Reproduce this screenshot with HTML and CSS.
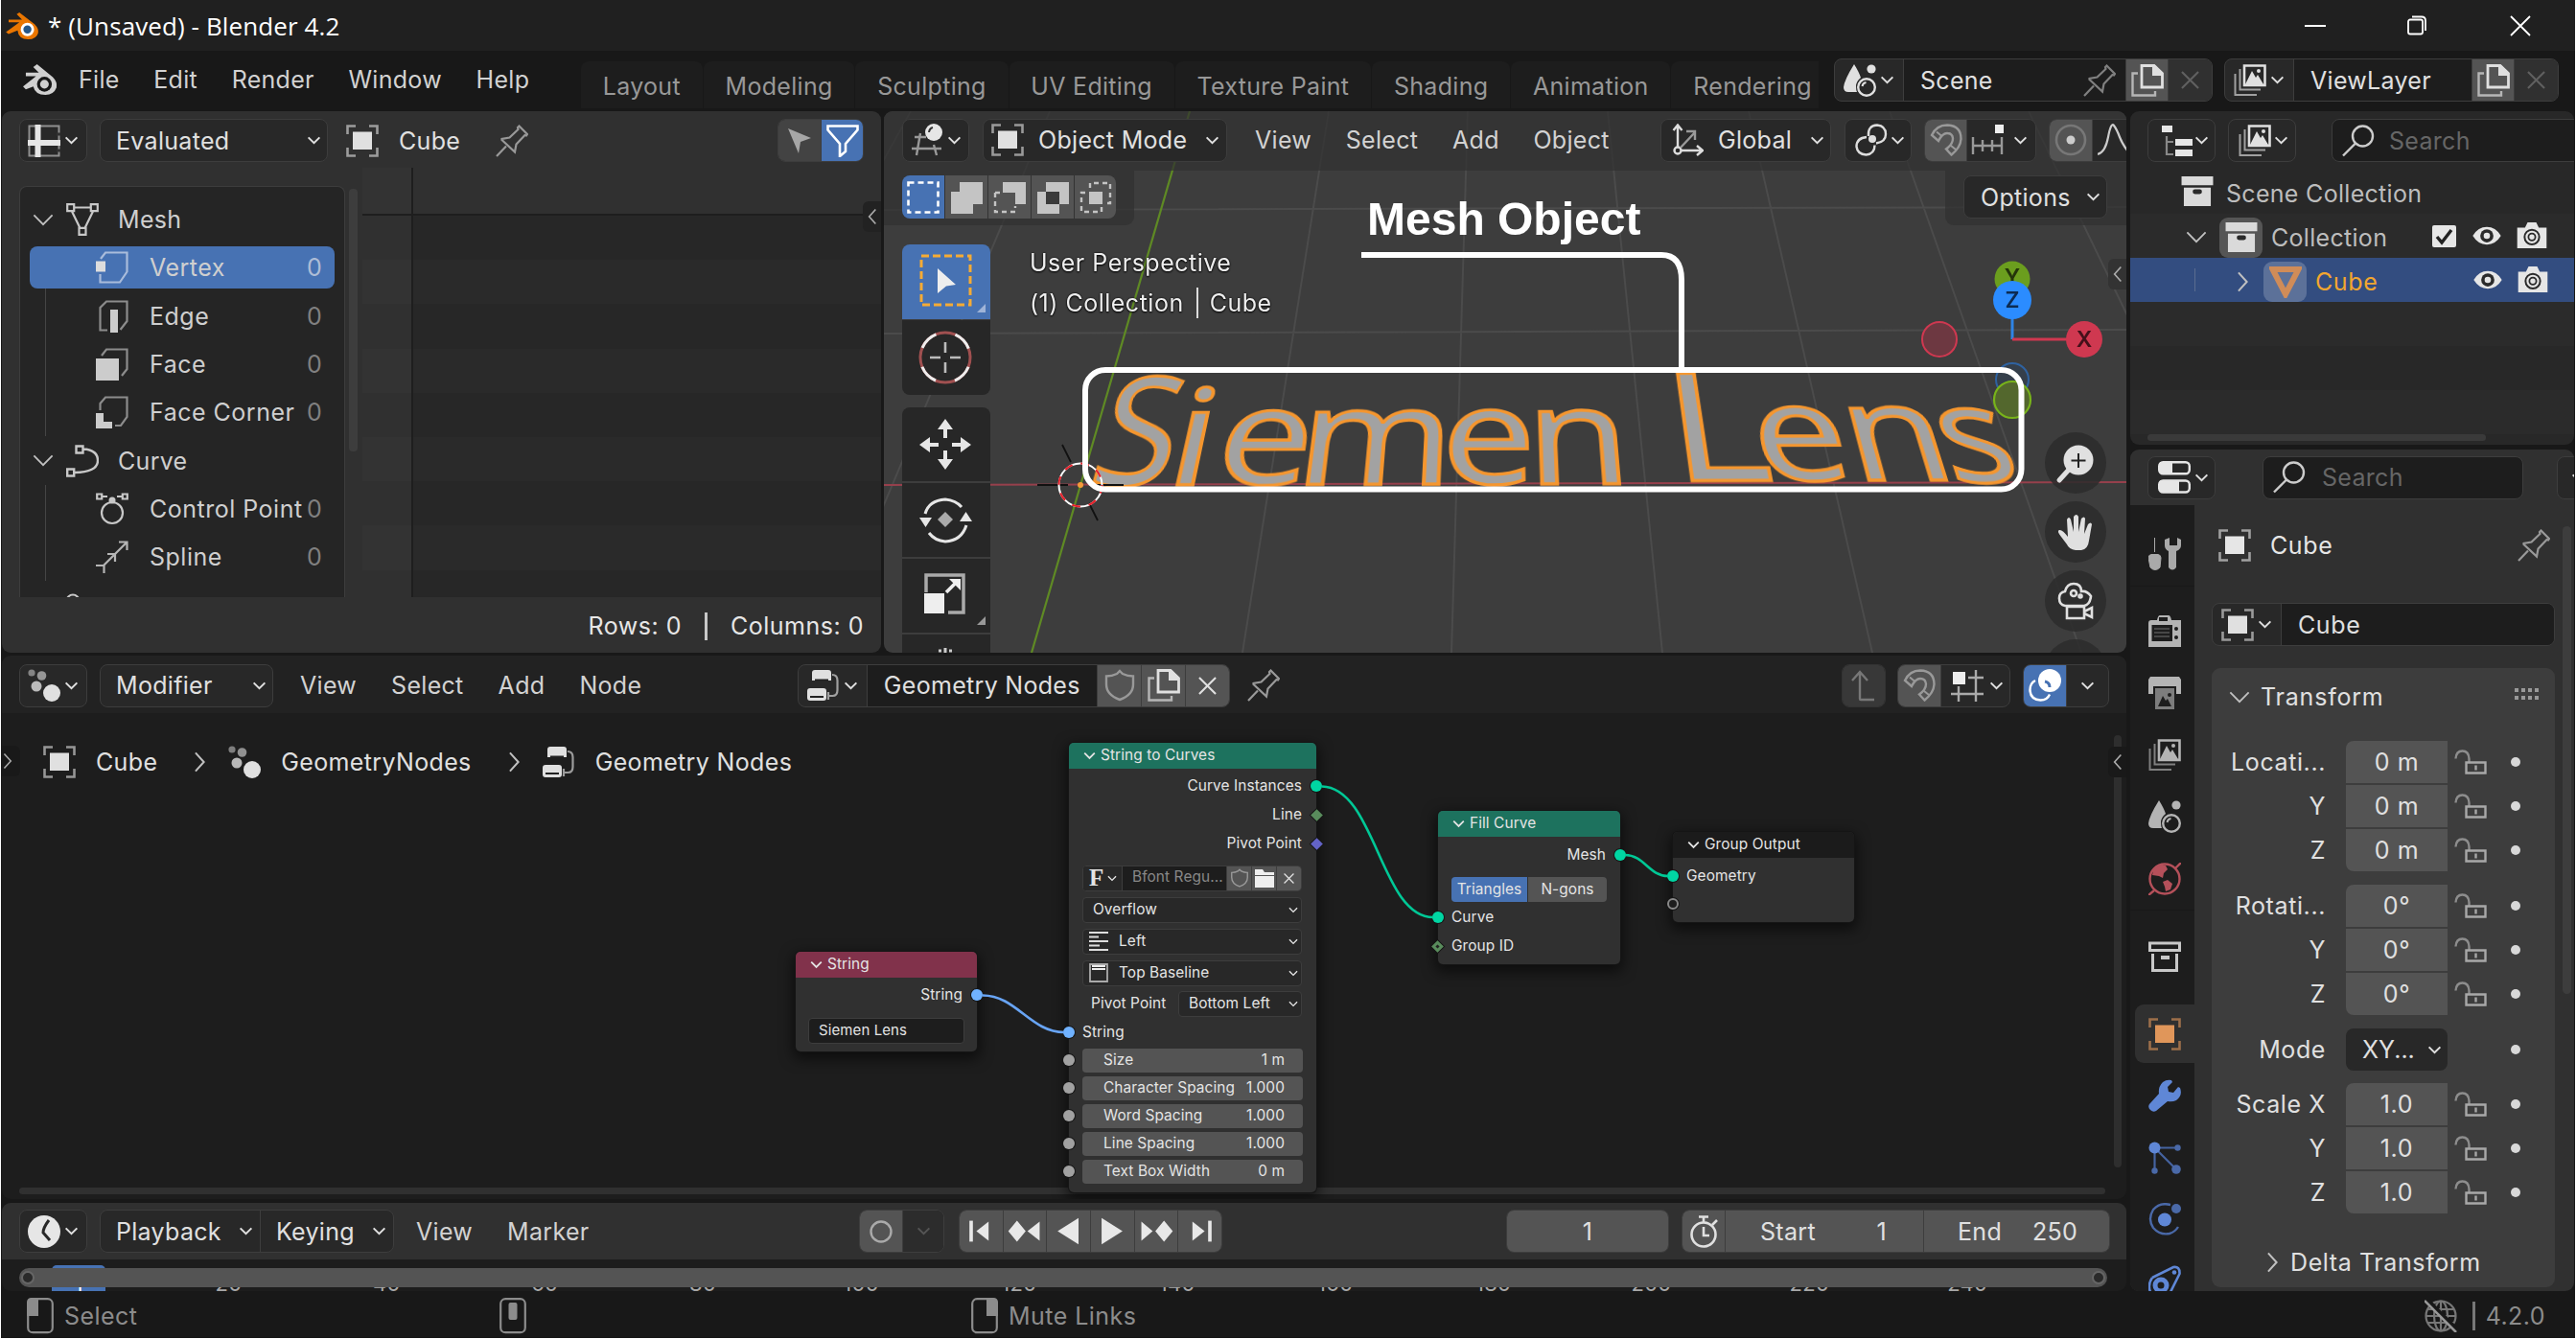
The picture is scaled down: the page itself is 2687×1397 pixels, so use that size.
FILE: index.html
```html
<!DOCTYPE html>
<html lang="en">
<head>
<meta charset="utf-8">
<title>* (Unsaved) - Blender 4.2</title>
<link rel="stylesheet" href="styles.css">
</head>
<body>
<svg class="defs" width="0" height="0">
  <symbol id="cv" viewBox="0 0 16 10"><path d="M1.5 1.5 8 8l6.500-6.500" fill="none" stroke="currentColor" stroke-width="2.200"/></symbol>
  <symbol id="cvb" viewBox="0 0 24 14"><path d="M1.500 1.500 12 12 22.500 1.500" fill="none" stroke="currentColor" stroke-width="2"/></symbol>
  <symbol id="cr" viewBox="0 0 14 24"><path d="M2 1.500 11.500 12 2 22.500" fill="none" stroke="currentColor" stroke-width="2.200"/></symbol>
  <symbol id="cl" viewBox="0 0 12 20"><path d="M10 1 2 10l8 9" fill="none" stroke="currentColor" stroke-width="2"/></symbol>
  <symbol id="obj" viewBox="0 0 34 34"><path d="M1.500 10V1.500H10M24 1.500h8.500V10M32.500 24v8.500H24M10 32.500H1.500V24" fill="none" stroke="currentColor" stroke-opacity=".62" stroke-width="2.600"/><path d="M7 7.500h20v18.500H7z" fill="currentColor"/></symbol>
  <symbol id="pin" viewBox="0 0 34 34"><path d="M1 33 11 22.500M6.500 16 20 28.500l1.500-8 9-9.500 1.500.500 1-1.500L24.500 1.500 23 3l.500 2-9 8.500-8 1.500z" fill="none" stroke="currentColor" stroke-width="2.200"/></symbol>
  <symbol id="copy" viewBox="0 0 34 34"><path d="M11 1.500h13l8.500 8V24H11z" fill="none" stroke="currentColor" stroke-width="2.800"/><path d="M22 1h3l8 8v3H22z" fill="currentColor"/><path d="M7 9.500H1.500v23H25V28" fill="none" stroke="currentColor" stroke-opacity=".7" stroke-width="2.400"/></symbol>
  <symbol id="x" viewBox="0 0 20 20"><path d="M1 1l18 18M19 1 1 19" fill="none" stroke="currentColor" stroke-width="2.200"/></symbol>
  <symbol id="shield" viewBox="0 0 32 34"><path d="M16 2 19 5q5 2.500 11 2.500V16q0 11-14 16Q2 27 2 16V7.500Q8 7.500 13 5z" fill="none" stroke="currentColor" stroke-width="2.400"/></symbol>
  <symbol id="search" viewBox="0 0 34 34"><circle cx="21.500" cy="12" r="10.500" fill="none" stroke="currentColor" stroke-width="2.400"/><path d="M14 19.500 1 32.500" stroke="currentColor" stroke-width="2.400"/></symbol>
  <symbol id="layers" viewBox="0 0 34 34"><path d="M11 1.500h21.500V22H11z" fill="none" stroke="currentColor" stroke-width="2.600"/><path d="M12 21l7-14 4 7 2-3 6 10z" fill="currentColor"/><circle cx="26" cy="7" r="2" fill="currentColor"/><path d="M6.500 5v21.500H28M1.500 10v22H24" fill="none" stroke="currentColor" stroke-opacity=".65" stroke-width="2"/></symbol>
  <symbol id="scene" viewBox="0 0 34 34"><path d="M11 0Q16 8 18 14q-5 4-5 9 0 4 1 6H5Q0 29 0 24 1 16 11 0z" fill="currentColor"/><circle cx="29" cy="5" r="4.600" fill="currentColor"/><circle cx="24" cy="24" r="8.800" fill="none" stroke="currentColor" stroke-width="2.400"/><path d="M19.500 23q.5-3.500 4-4" fill="none" stroke="currentColor" stroke-width="2"/></symbol>
  <symbol id="geo" viewBox="0 0 34 34"><g fill="currentColor"><circle cx="25" cy="25" r="9"/><circle cx="9" cy="18" r="5.500" opacity=".8"/><circle cx="14.500" cy="7" r="4.800" opacity=".6"/><circle cx="4" cy="4" r="3.600" opacity=".5"/></g></symbol>
  <symbol id="tree" viewBox="0 0 34 34"><path d="M8 1h14q3 0 3 3v8H5V4q0-3 3-3zM3 20h14q3 0 3 3v7q0 3-3 3H3q-3 0-3-3v-7q0-3 3-3z" fill="currentColor"/><path d="M8 11.500h14M3 29h14" stroke="#222" stroke-width="2"/><path d="M26 6q5.500 0 5.500 6v10q0 6-5 6H22M22 24v8" fill="none" stroke="currentColor" stroke-opacity=".65" stroke-width="2.200"/></symbol>
  <symbol id="box" viewBox="0 0 34 32"><path d="M0 0h34v9.500H0zM2.500 12h29v20h-29z" fill="currentColor"/><rect x="12" y="14" width="10" height="5" rx="2.500" fill="#2a2a2a"/></symbol>
  <symbol id="eye" viewBox="0 0 34 24"><path d="M1 12Q7 2 17 2t16 10Q27 22 17 22T1 12z" fill="currentColor"/><circle cx="17" cy="12" r="7.500" fill="#2b2b2b"/><circle cx="17" cy="12" r="3.600" fill="currentColor"/></symbol>
  <symbol id="cam" viewBox="0 0 34 30"><path d="M0 6h9l3-6h10l3 6h9v24H0z" fill="currentColor"/><circle cx="17" cy="17" r="8.500" fill="none" stroke="#2b2b2b" stroke-width="2.200"/><circle cx="17" cy="17" r="4" fill="none" stroke="#2b2b2b" stroke-width="2"/></symbol>
  <symbol id="magnet" viewBox="0 0 34 34"><path d="M2 12Q7 1.500 18 1.500 32.500 2 32.500 16q-.5 9-10 16.500L17 26.500q7-5 7-11Q23.500 10 18 10q-5 0-9 8z" fill="none" stroke="currentColor" stroke-width="2.400"/><path d="M7 8.500l6 5M27.500 27.500l-6-5" stroke="currentColor" stroke-width="2"/></symbol>
  <symbol id="lock" viewBox="0 0 34 26"><path d="M1.500 9.500Q2 1.500 8.500 1.500t7 8v4" fill="none" stroke="currentColor" stroke-opacity=".75" stroke-width="2.400"/><path d="M12.500 13.500h20v11h-20z" fill="none" stroke="currentColor" stroke-width="2.400"/><path d="M22.500 16.500v5" stroke="currentColor" stroke-width="2.400"/></symbol>
  <symbol id="wrench" viewBox="0 0 34 34"><path d="M33 9q3 8-4 13-4 2-9 1L8 33q-3 2-6-1t-1-6l10-11Q10 8 15 3q4-3 9-2l1 2-5 5 1 5 5 1 5-6z" fill="currentColor"/></symbol>
  <symbol id="mouse" viewBox="0 0 28 38"><rect x="1.200" y="1.200" width="25.600" height="35" rx="5" fill="none" stroke="currentColor" stroke-width="2.200"/></symbol>
</svg>

<div class="app">
  <header class="title">
    <svg class="logo" viewBox="0 0 38 30"><path d="M1 22 16 11H4V8h15l-6-6 3-2 17 13q5 5 4 10-2 7-11 7-11 0-12-10L4 24z" fill="#ea7600"/><circle cx="25" cy="19" r="7.500" fill="#fff"/><circle cx="25" cy="19" r="4.500" fill="#265787"/></svg>
    <span class="title-text">* (Unsaved) - Blender 4.2</span>
    <svg class="winctl" viewBox="0 0 240 30"><path d="M1 15h22" stroke="#fff" stroke-width="2"/><rect x="109" y="8.500" width="15" height="15" rx="2" fill="none" stroke="#fff" stroke-width="1.800"/><path d="M113 5.500h10q4 0 4 4V20" fill="none" stroke="#fff" stroke-width="1.800"/><path d="M216 5l20 20M236 5l-20 20" stroke="#fff" stroke-width="1.800"/></svg>
  </header>

  <div class="topbar">
    <svg class="blogo" viewBox="0 0 38 34"><path d="M1 24 15 13H4v-4h14l-6-6 4-3 17 14q5 5 4 11-3 8-12 8-11 0-13-9L4 27z" fill="#d0d0d0"/><circle cx="24" cy="21.500" r="8" fill="#181818"/><circle cx="24" cy="21.500" r="4.700" fill="#d0d0d0"/></svg>
    <nav class="menu"><span>File</span><span>Edit</span><span>Render</span><span>Window</span><span>Help</span></nav>
    <div class="tabs"><span>Layout</span><span>Modeling</span><span>Sculpting</span><span>UV Editing</span><span>Texture Paint</span><span>Shading</span><span>Animation</span><span>Rendering</span></div>
    <div class="group scene">
      <span class="seg dd"><svg class="ic"><use href="#scene"/></svg><svg class="cv"><use href="#cv"/></svg></span>
      <span class="seg field scene-name">Scene<svg class="ic dim"><use href="#pin"/></svg></span>
      <span class="seg lit"><svg class="ic"><use href="#copy"/></svg></span>
      <span class="seg off"><svg class="xx"><use href="#x"/></svg></span>
    </div>
    <div class="group layer">
      <span class="seg dd"><svg class="ic"><use href="#layers"/></svg><svg class="cv"><use href="#cv"/></svg></span>
      <span class="seg field layer-name">ViewLayer</span>
      <span class="seg lit"><svg class="ic"><use href="#copy"/></svg></span>
      <span class="seg off"><svg class="xx"><use href="#x"/></svg></span>
    </div>
  </div>

  <div class="work">
    <div class="left">
      <div class="upper">
        <section class="sheet">
          <div class="head">
            <span class="btn dd"><svg class="ic" viewBox="0 0 34 34"><path d="M1.500 1.500h31v31h-31z" fill="none" stroke="#8f8f8f" stroke-width="2"/><path d="M0 19h34M10.500 0v34" stroke="#e6e6e6" stroke-width="6"/><path d="M30 10h4M30 27h4" stroke="#303030" stroke-width="3"/></svg><svg class="cv"><use href="#cv"/></svg></span>
            <span class="btn eval">Evaluated<svg class="cv"><use href="#cv"/></svg></span>
            <svg class="ic ml19"><use href="#obj"/></svg><span class="ml20 objname">Cube</span><svg class="ic dim pinned"><use href="#pin"/></svg>
            <div class="group filt"><span class="seg mid"><svg width="24" height="26" viewBox="0 0 24 26"><path d="M0 0 24 10 13 14 11 26z" fill="#a6a6a6"/></svg></span><span class="seg sel"><svg class="ic" viewBox="0 0 34 34"><path d="M1.500 1.500h31v4L20 20v8l-6 5V20L1.500 5.500z" fill="none" stroke="#fff" stroke-width="2.600"/></svg></span></div>
          </div>
          <div class="sheet-body">
            <div class="tree">
              <div class="tr top"><svg class="cvb"><use href="#cvb"/></svg><svg class="ic" viewBox="0 0 34 34"><g fill="none" stroke="#c8c8c8" stroke-width="2.200"><path d="M1.200 1.200h7v7h-7zM25.800 1.200h7v7h-7zM13.500 25.800h7v7h-7zM8 4.500h18M6 8.500 14.500 26M28 8.500 19.500 26"/></g></svg><span>Mesh</span></div>
              <div class="kids">
              <div class="tr on"><svg class="ic" viewBox="0 0 34 34"><path d="M5 8l5-6.500h22.500v20L25 32.500H4.500V24" fill="none" stroke="#a9bcdb" stroke-width="2.200"/><path d="M0 10.500h10v11H0z" fill="#ddd"/></svg><span>Vertex</span><b>0</b></div>
              <div class="tr"><svg class="ic" viewBox="0 0 34 34"><path d="M12 31.500H4.500V8L11 1.500h21.500V22l-7 9" fill="none" stroke="#8c8c8c" stroke-width="2.200"/><path d="M15 10h8v24h-8z" fill="#ccc"/></svg><span>Edge</span><b>0</b></div>
              <div class="tr"><svg class="ic" viewBox="0 0 34 34"><path d="M6 8l5-6.500h21.500V22L27 29" fill="none" stroke="#8c8c8c" stroke-width="2.200"/><path d="M0 11h24v23H0z" fill="#ccc"/></svg><span>Face</span><b>0</b></div>
              <div class="tr"><svg class="ic" viewBox="0 0 34 34"><path d="M4.500 15V8L10 1.500h22.500V22L26 31h-6" fill="none" stroke="#8c8c8c" stroke-width="2.200"/><path d="M0 18h8v9h9v7H0z" fill="#ccc"/></svg><span>Face Corner</span><b>0</b></div>
              </div>
              <div class="tr top"><svg class="cvb"><use href="#cvb"/></svg><svg class="ic" viewBox="0 0 34 34"><g fill="none" stroke="#c8c8c8" stroke-width="2.400"><path d="M10.500 1.500h7v7h-7zM1.200 25.500h7v7h-7zM18 4.500q15 1 15 12 0 12-24 12.500"/></g></svg><span>Curve</span></div>
              <div class="kids two">
              <div class="tr"><svg class="ic" viewBox="0 0 34 34"><g fill="none" stroke="#c8c8c8" stroke-width="2.200"><circle cx="17" cy="21" r="11"/><path d="M1.200 1.500h5v5h-5zM27.800 1.500h5v5h-5zM7 4h5M22 4h5"/></g><circle cx="17" cy="8" r="3.500" fill="#c8c8c8"/></svg><span>Control Point</span><b>0</b></div>
              <div class="tr"><svg class="ic" viewBox="0 0 34 34"><path d="M8 26 32 2M24 1.500h8.500V10M8.500 34v-8H0M20 22v-8h-8" fill="none" stroke="#b5b5b5" stroke-width="2.200"/></svg><span>Spline</span><b>0</b></div>
              </div>
              <div class="tr cut"><svg width="16" height="20" viewBox="0 0 16 20"><circle cx="8" cy="8" r="6.500" fill="none" stroke="#c8c8c8" stroke-width="2.200"/></svg></div>
            </div>
            <i class="tree-bar"></i>
            <div class="table"><div class="thead"><i></i></div><div class="tbody"><i></i></div></div>
          </div>
          <div class="sheet-foot"><span>Rows: 0</span><i></i><span>Columns: 0</span></div>
          <span class="flap sheet-flap"><svg width="10" height="18"><use href="#cl"/></svg></span>
        </section>

        <section class="view3d">
          <svg class="scene3d" viewBox="922 116 1296 565">
            <g stroke="#4b4b4b" stroke-width="2" fill="none"><path d="M950 116 638 681M1095 116 857 681M1386 116 1296 681M1531 116 1514 681M1677 116 1734 681M1824 116 1953 681M1971 116 2171 681M2116 116 2389 681M922 219 2218 216M922 348 2218 344"/></g>
            <path d="M922 506 2218 503" stroke="#96404c" stroke-width="2"/>
            <path d="M1241 116 1076 681" stroke="#5f8a24" stroke-width="2.200"/>
          </svg>
          <svg class="meshtext" viewBox="0 0 10 10">
            <text transform="scale(.93 1)" x="-460" y="0" class="cap">S</text>
            <text transform="scale(1.200 1)"><tspan x="-289" class="low">i</tspan><tspan x="-247" class="low">e</tspan><tspan x="-176" class="low">m</tspan><tspan x="-48" class="low">e</tspan><tspan x="28" class="low">n</tspan><tspan x="155" y="-3" class="cap">L</tspan><tspan x="231" class="low">e</tspan><tspan x="313" class="low">n</tspan></text>
            <text transform="scale(1.080 1)" x="441" y="-1" class="low">s</text>
          </svg>
          <div class="head vhead">
            <span class="btn dd"><svg class="ic" viewBox="0 0 34 34"><path d="M4 14h12M1 26h31M10 10 6 33M24 22l3 11" stroke="#999" stroke-width="2.400"/><circle cx="24" cy="9" r="9" fill="#e6e6e6"/><path d="M19 9q.5-4 4-5" stroke="#333" stroke-width="2" fill="none"/></svg><svg class="cv"><use href="#cv"/></svg></span>
            <span class="btn mode"><svg class="ic"><use href="#obj"/></svg><span>Object Mode</span><svg class="cv"><use href="#cv"/></svg></span>
            <nav class="menu vmenu"><span>View</span><span>Select</span><span>Add</span><span>Object</span></nav>
            <span class="btn global"><svg class="ic" viewBox="0 0 34 34"><g fill="none" stroke="#ddd" stroke-width="2.400"><path d="M7 24V3M2.500 7 7 1.500 11.500 7M10 28h22M27 23l6 5-6 5"/><circle cx="7" cy="28" r="3.500"/><path d="M10 25 25 9M16 8h9v9" stroke="#999"/></g></svg><span>Global</span><svg class="cv"><use href="#cv"/></svg></span>
            <span class="btn dd pivot"><svg class="ic" viewBox="0 0 34 34"><g fill="none" stroke="#ddd" stroke-width="2.400"><path d="M14 13q-1-11 9-11.500 9 1 9 9.500 0 8-10 9.500"/><path d="M12 14Q1.500 15 1.500 24q1 8 10 8.500 9-1 9-10"/></g><circle cx="18" cy="16" r="4" fill="#ddd"/></svg><svg class="cv"><use href="#cv"/></svg></span>
            <span class="group snap"><span class="seg lit"><svg class="ic dim"><use href="#magnet"/></svg></span><span class="seg dd"><svg class="ic" viewBox="0 0 34 34"><path d="M2 14v18M12 17v12M22 17v12M32 14v18M2 23h30" stroke="#999" stroke-width="2.400"/><path d="M25 1h9v9h-9z" fill="#eee"/></svg><svg class="cv"><use href="#cv"/></svg></span></span>
            <span class="group prop"><span class="seg lit"><svg class="ic" viewBox="0 0 34 34"><circle cx="17" cy="17" r="15" fill="none" stroke="#777" stroke-width="2.600"/><circle cx="17" cy="17" r="4.500" fill="#ccc"/></svg></span><span class="seg"><svg class="ic" viewBox="0 0 34 34"><path d="M0 32Q8 30 11 14T17 2t6 12 11 18" fill="none" stroke="#ccc" stroke-width="2.200"/></svg></span></span>
          </div>
          <div class="subhead">
            <div class="selmodes"><div class="group">
              <span class="seg sel"><svg class="ic" viewBox="0 0 34 34"><path d="M1.500 1.500h31v31h-31z" fill="none" stroke="#fff" stroke-width="2.600" stroke-dasharray="6 4"/></svg></span>
              <span class="seg lit"><svg class="ic" viewBox="0 0 34 34"><path d="M10 1h24v23H24v10H1V11h9z" fill="#c4c4c4"/></svg></span>
              <span class="seg lit"><svg class="ic" viewBox="0 0 34 34"><path d="M10 1h24v23H23V12H10z" fill="#c4c4c4"/><path d="M2 12v20h21v-6M2 12h6" fill="none" stroke="#c4c4c4" stroke-width="2.400" stroke-dasharray="5 4"/></svg></span>
              <span class="seg lit"><svg class="ic" viewBox="0 0 34 34"><path d="M10 1h24v23H24v10H1V11h9z" fill="#c4c4c4"/><path d="M10 11h14v13H10z" fill="#3a3a3a"/></svg></span>
              <span class="seg lit"><svg class="ic" viewBox="0 0 34 34"><path d="M11 7V2h21v21h-5M6 12H2v20h21v-5" fill="none" stroke="#c4c4c4" stroke-width="2.400" stroke-dasharray="5 4"/><path d="M10 11h14v13H10z" fill="#c4c4c4"/></svg></span>
            </div></div>
            <div class="optwrap"><span class="btn opts">Options<svg class="cv"><use href="#cv"/></svg></span></div>
          </div>
          <div class="vbody">
            <div class="tools">
              <div class="toolset">
              <span class="tool sel"><svg viewBox="0 0 92 77"><rect x="20" y="13" width="51" height="51" fill="none" stroke="#f5ab35" stroke-width="3" stroke-dasharray="8 4"/><path d="M37 26l19 17-10 1.500L37 52z" fill="#eee"/><path d="M78 72h9v-9z" fill="#9fb4d8"/></svg></span>
              <span class="tool"><svg viewBox="0 0 92 77"><circle cx="45" cy="40" r="26" fill="none" stroke="#a05050" stroke-width="3"/><circle cx="45" cy="40" r="26" fill="none" stroke="#eee" stroke-width="3" stroke-dasharray="20.400 20.400" stroke-dashoffset="-10"/><path d="M45 24v11M45 45v11M29 40h11M50 40h11" stroke="#bbb" stroke-width="2.600"/></svg></span>
              </div>
              <div class="toolset">
              <span class="tool"><svg viewBox="0 0 92 77"><path d="M45 13l8 11H37zM45 66l8-11H37zM18 40l11-8v16zM72 40l-11-8v16z" fill="#e6e6e6"/><path d="M45 24v9M45 46v9M29 40h9M52 40h9" stroke="#e6e6e6" stroke-width="4"/></svg></span>
              <span class="tool"><svg viewBox="0 0 92 77"><path d="M24 33q4-14 21-15 11 1 17 8M67 45q-5 16-22 17-11-1-17-9" fill="none" stroke="#e6e6e6" stroke-width="3"/><path d="M18 37h13l-6.500 10zM60 41h13l-6.500-10z" fill="#e6e6e6"/><path d="M45 31l8 8-8 8-8-8z" fill="#aaa"/></svg></span>
              <span class="tool"><svg viewBox="0 0 92 77"><path d="M25 36V18h39v39H48" fill="none" stroke="#aaa" stroke-width="3.500"/><path d="M23 37h21v21H23z" fill="#eee"/><path d="M46 36 58 24" stroke="#eee" stroke-width="3.500"/><path d="M49 22h12v12z" fill="#eee"/><path d="M78 70h9v-9z" fill="#999"/></svg></span>
              <span class="tool"><svg viewBox="0 0 92 77"><path d="M45 15v5M38 18h3M49 18h3" stroke="#ccc" stroke-width="3"/></svg></span>
              </div>
            </div>
            <div class="info"><p>User Perspective</p><p>(1) Collection<i></i>Cube</p></div>
          </div>
          <span class="flap view-flap"><svg width="10" height="18"><use href="#cl"/></svg></span>
          <svg class="over3d" viewBox="922 116 1296 565">
            <path d="M1082 506h32M1140 506h32M1108 464l9 18M1136 525l9 18" stroke="#111" stroke-width="1.800"/>
            <circle cx="1127" cy="506" r="22.500" fill="none" stroke="#fff" stroke-width="2"/><circle cx="1127" cy="506" r="22.500" fill="none" stroke="#e8202a" stroke-width="2" stroke-dasharray="8.800 8.800"/>
            <circle cx="1127" cy="506" r="3" fill="#f59a3a"/>
            <path d="M2099 354v-22" stroke="#2e84e6" stroke-width="3"/><path d="M2099 354h60" stroke="#d03850" stroke-width="3"/>
            <circle cx="2099" cy="396" r="17" fill="#353f4b" stroke="#2f62a0" stroke-width="2"/>
            <circle cx="2099" cy="417" r="19" fill="#53672d" stroke="#78b31a" stroke-width="2.200"/>
            <circle cx="2023" cy="354" r="18" fill="#6d3841" stroke="#cf3850" stroke-width="2"/>
            <circle cx="2099" cy="291" r="18.500" fill="#6b9e1e"/>
            <g class="axis"><text x="2099" y="297" fill="#24350a">Y</text></g>
            <circle cx="2099" cy="313" r="20" fill="#2b8cff"/>
            <circle cx="2174" cy="354" r="19" fill="#cf3850"/>
            <g class="axis"><text x="2099" y="321" fill="#0c2b52">Z</text><text x="2174" y="362" fill="#43101a">X</text></g>
            <g fill="#2c2c2c" fill-opacity=".85"><circle cx="2165" cy="483" r="32"/><circle cx="2165" cy="555" r="32"/><circle cx="2165" cy="627" r="32"/><circle cx="2165" cy="699" r="32"/></g>
            <circle cx="2168" cy="480" r="15.500" fill="#e0e0e0"/><path d="M2168 473v15M2160.500 480.500h15" stroke="#222" stroke-width="2"/><path d="M2158 490l-10 11" stroke="#e0e0e0" stroke-width="5" stroke-linecap="round"/>
            <path d="M2150 560q-5-6-2-7 3-1 9 7l-1-18q2-4 4 0l3 13v-16q3-4 5 0v16l3-14q3-3 4 0l-1 16 4-10q3-3 4 0l-3 17q-1 9-8 10h-6q-7-1-9-6z" fill="#e0e0e0"/>
            <g fill="none" stroke="#e0e0e0" stroke-width="2.600"><path d="M2154 632q-6-1-6-8 0-6 6-7 2-8 9-8 8 0 8 8 6-1 10 5-1 9-7 10z"/><path d="M2156 633h18v12h-18zM2174 638l8-4v10l-8-4"/><circle cx="2163" cy="619" r="3"/><circle cx="2170" cy="622" r="1.500"/></g>
            <path d="M1420 266h313q21 0 21 26v94" fill="none" stroke="#fff" stroke-width="6"/>
            <rect x="1132" y="386" width="976.500" height="124.500" rx="21" fill="none" stroke="#fff" stroke-width="6"/>
            <text class="callout" x="1426" y="244.500">Mesh Object</text>
          </svg>
        </section>
      </div>

      <section class="nodes">
        <div class="head nhead">
          <span class="btn dd"><svg class="ic"><use href="#geo"/></svg><svg class="cv"><use href="#cv"/></svg></span>
          <span class="btn modf">Modifier<svg class="cv"><use href="#cv"/></svg></span>
          <nav class="menu nmenu"><span>View</span><span>Select</span><span>Add</span><span>Node</span></nav>
          <div class="group data"><span class="seg dd"><svg class="ic"><use href="#tree"/></svg><svg class="cv"><use href="#cv"/></svg></span><span class="seg field dname">Geometry Nodes</span><span class="seg lit"><svg class="ic dim"><use href="#shield"/></svg></span><span class="seg lit"><svg class="ic"><use href="#copy"/></svg></span><span class="seg lit"><svg class="xx"><use href="#x"/></svg></span></div>
          <svg class="ic dim npin"><use href="#pin"/></svg>
          <div class="group up"><span class="seg offl"><svg class="ic" viewBox="0 0 34 34"><path d="M13 3v28q0 1 1 1h14M5 12l8-9 8 9" fill="none" stroke="#777" stroke-width="2.400"/></svg></span></div>
          <div class="group nsnap"><span class="seg lit"><svg class="ic dim"><use href="#magnet"/></svg></span><span class="seg dd"><svg class="ic" viewBox="0 0 34 34"><path d="M18 9h16M0 26h34M26 1v33M8 18v16" stroke="#aaa" stroke-width="2.400"/><path d="M2 3h13v13H2z" fill="#eee"/></svg><svg class="cv"><use href="#cv"/></svg></span></div>
          <div class="group over"><span class="seg sel"><svg class="ic" viewBox="0 0 34 34"><circle cx="22" cy="12" r="12" fill="#fff"/><path d="M7 12Q1 15 1.500 23q1 9 11 9.500 7 0 9.500-6" fill="none" stroke="#fff" stroke-width="2.400"/><path d="M17 13q5 1 5 6" stroke="#4772b3" stroke-width="3" fill="none"/></svg></span><span class="seg ov2"><svg class="cv"><use href="#cv"/></svg></span></div>
        </div>
        <div class="crumbs"><svg class="ic"><use href="#obj"/></svg><span>Cube</span><svg class="cr"><use href="#cr"/></svg><svg class="ic"><use href="#geo"/></svg><span>GeometryNodes</span><svg class="cr"><use href="#cr"/></svg><svg class="ic"><use href="#tree"/></svg><span>Geometry Nodes</span></div>
        <i class="hbar"></i><i class="vbar"></i>
        <span class="flap n-left"><svg width="10" height="20"><use href="#cr"/></svg></span>
        <span class="flap n-right"><svg width="10" height="18"><use href="#cl"/></svg></span>

        <div class="node n-string"><h4 class="red"><svg><use href="#cv"/></svg>String</h4>
          <div class="out">String<i class="sock str"></i></div><div class="nfield">Siemen Lens</div></div>

        <div class="node n-curves"><h4 class="green"><svg><use href="#cv"/></svg>String to Curves</h4>
          <div class="out">Curve Instances<i class="sock geom"></i></div>
          <div class="out">Line<i class="sock dia"></i></div>
          <div class="out">Pivot Point<i class="sock dia pur"></i></div>
          <div class="fontrow"><span class="f">F<svg><use href="#cv"/></svg></span><span class="fn">Bfont Regu...</span><span class="fb"><svg class="dim" width="20" height="20"><use href="#shield"/></svg></span><span class="fb"><svg width="20" height="20" viewBox="0 0 20 20"><path d="M0 1h8l2 3h10v3H0zM0 8h20v12H0z" fill="#eee"/></svg></span><span class="fb"><svg width="11" height="11"><use href="#x"/></svg></span></div>
          <div class="drop">Overflow<svg><use href="#cv"/></svg></div>
          <div class="drop di"><svg class="mi" viewBox="0 0 20 20"><path d="M0 1h20M0 5.500h10M0 10h20M0 14.500h11M0 19h20" stroke="#ddd" stroke-width="1.800"/></svg>Left<svg><use href="#cv"/></svg></div>
          <div class="drop di"><svg class="mi" viewBox="0 0 20 20"><path d="M1 1h18v18H1z" fill="none" stroke="#aaa" stroke-width="1.800"/><path d="M3 3h14M3 6h14" stroke="#eee" stroke-width="2"/></svg>Top Baseline<svg><use href="#cv"/></svg></div>
          <div class="prow"><span>Pivot Point</span><div class="drop">Bottom Left<svg><use href="#cv"/></svg></div></div>
          <div class="in">String<i class="sock str"></i></div>
          <div class="num"><span>Size</span><span>1 m</span><i class="sock"></i></div>
          <div class="num"><span>Character Spacing</span><span>1.000</span><i class="sock"></i></div>
          <div class="num"><span>Word Spacing</span><span>1.000</span><i class="sock"></i></div>
          <div class="num"><span>Line Spacing</span><span>1.000</span><i class="sock"></i></div>
          <div class="num"><span>Text Box Width</span><span>0 m</span><i class="sock"></i></div>
        </div>

        <div class="node n-fill"><h4 class="green"><svg><use href="#cv"/></svg>Fill Curve</h4>
          <div class="out">Mesh<i class="sock geom"></i></div>
          <div class="toggle"><span>Triangles</span><span>N-gons</span></div>
          <div class="in">Curve<i class="sock geom"></i></div>
          <div class="in">Group ID<i class="sock dia hollow"></i></div></div>

        <div class="node n-out"><h4 class="dark"><svg><use href="#cv"/></svg>Group Output</h4>
          <div class="in">Geometry<i class="sock geom"></i></div><div class="in"><i class="sock ring"></i></div></div>

        <svg class="links" viewBox="2 684 2216 567"><g fill="none" stroke-width="2.600"><path d="M1025 1038.500C1060 1038.500 1075 1077 1110 1077" stroke="#68a4f4"/><path d="M1379 820.500C1435 822 1440 957 1495 957" stroke="#00c896"/><path d="M1695 892C1715 892 1720 914 1740 914" stroke="#00c896"/></g></svg>
      </section>

      <section class="timeline">
        <div class="head">
          <span class="btn dd"><svg class="ic" viewBox="0 0 34 34"><circle cx="17" cy="17" r="17" fill="#e6e6e6"/><path d="M22 5q-6 8-6 13l7 8" fill="none" stroke="#282828" stroke-width="3"/></svg><svg class="cv"><use href="#cv"/></svg></span>
          <div class="group play"><span class="seg pb">Playback<svg class="cv"><use href="#cv"/></svg></span><span class="seg ky">Keying<svg class="cv"><use href="#cv"/></svg></span></div>
          <nav class="menu tmenu"><span>View</span><span>Marker</span></nav>
          <div class="group rec"><span class="seg lit"><svg width="24" height="24" viewBox="0 0 24 24"><circle cx="12" cy="12" r="10.500" fill="none" stroke="#aaa" stroke-width="2.400"/></svg></span><span class="seg offd"><svg class="cv"><use href="#cv"/></svg></span></div>
          <div class="group trans">
            <span class="seg lit"><svg viewBox="0 0 44 34"><path d="M11 5v24" stroke="#e8e8e8" stroke-width="4"/><path d="M31 6v22L17 17z" fill="#e8e8e8"/></svg></span>
            <span class="seg lit"><svg viewBox="0 0 44 34"><path d="M13 5l10 12-10 12L3 17zM39 6v22L25 17z" fill="#e8e8e8"/></svg></span>
            <span class="seg lit"><svg viewBox="0 0 44 34"><path d="M33 2v30L9 17z" fill="#e8e8e8"/></svg></span>
            <span class="seg lit"><svg viewBox="0 0 44 34"><path d="M10 2v30l24-15z" fill="#e8e8e8"/></svg></span>
            <span class="seg lit"><svg viewBox="0 0 44 34"><path d="M31 5l10 12-10 12-10-12zM5 6v22l13-11z" fill="#e8e8e8"/></svg></span>
            <span class="seg lit"><svg viewBox="0 0 44 34"><path d="M33 5v24" stroke="#e8e8e8" stroke-width="4"/><path d="M13 6v22l14-11z" fill="#e8e8e8"/></svg></span>
          </div>
          <div class="group frame"><span class="seg lit">1</span></div>
          <div class="group range"><span class="seg lit"><svg class="ic" viewBox="0 0 34 34"><g fill="none" stroke="#e0e0e0" stroke-width="2.600"><circle cx="17" cy="20" r="12.500"/><path d="M12 1.500h10M17 1v6M26 10l5-5M17 12v9h6"/></g></svg></span><span class="seg lit st"><span>Start</span><span>1</span></span><span class="seg lit en"><span>End</span><span>250</span></span></div>
        </div>
        <div class="ruler">
          <div class="ticks"><span class="cur">1</span><span>20</span><span>40</span><span>60</span><span>80</span><span>100</span><span>120</span><span>140</span><span>160</span><span>180</span><span>200</span><span>220</span><span>240</span></div>
          <div class="scrub"><i></i><i></i></div>
        </div>
      </section>
    </div>

    <div class="right">
      <section class="outliner">
        <div class="head">
          <span class="btn dd hier"><svg class="ic" viewBox="0 0 34 34"><path d="M0 1h11v7H0zM14 15h18v7H14zM14 26h18v7H14z" fill="#e6e6e6"/><path d="M5 12v19h7M5 18h7" fill="none" stroke="#888" stroke-width="2.200"/></svg><svg class="cv"><use href="#cv"/></svg></span>
          <span class="btn dd disp"><svg class="ic"><use href="#layers"/></svg><svg class="cv"><use href="#cv"/></svg></span>
          <span class="btn find ofind"><svg class="ic"><use href="#search"/></svg>Search</span>
        </div>
        <div class="orow r0"><svg class="bx"><use href="#box"/></svg><span>Scene Collection</span></div>
        <div class="orow r1"><svg class="cvb"><use href="#cvb"/></svg><em><svg class="bx"><use href="#box"/></svg></em><span>Collection</span><svg class="chk" viewBox="0 0 25 23"><rect width="25" height="23" rx="2" fill="#e6e6e6"/><path d="M5 12l5 6L20 5" fill="none" stroke="#222" stroke-width="3.400"/></svg><svg class="eye"><use href="#eye"/></svg><svg class="camera"><use href="#cam"/></svg></div>
        <div class="orow r2"><i></i><svg class="cr"><use href="#cr"/></svg><em><svg class="ic" viewBox="0 0 34 34"><path d="M3.500 4h27L17 30z" fill="none" stroke="#d08c58" stroke-width="6"/></svg></em><span>Cube</span><svg class="eye"><use href="#eye"/></svg><svg class="camera"><use href="#cam"/></svg></div>
        <div class="orow"></div><div class="orow alt"></div><div class="orow"></div>
        <i class="obar"></i>
      </section>

      <section class="props">
        <div class="head">
          <span class="btn dd"><svg class="ic" viewBox="0 0 34 34"><rect x="1.200" y="1.200" width="31.600" height="12" rx="4" fill="none" stroke="#e6e6e6" stroke-width="2.400"/><path d="M3 1h12v12H3q-2 0-2-6t2-6z" fill="#e6e6e6"/><rect x="1.200" y="20.500" width="31.600" height="12" rx="4" fill="none" stroke="#e6e6e6" stroke-width="2.400"/><path d="M3 20h19v12H3q-2 0-2-6t2-6z" fill="#e6e6e6"/></svg><svg class="cv"><use href="#cv"/></svg></span>
          <span class="btn find pfind"><svg class="ic"><use href="#search"/></svg>Search</span>
          <span class="btn more"><svg class="cv"><use href="#cv"/></svg></span>
        </div>
        <div class="pbody">
          <div class="ptabs">
            <span class="t0"><svg class="ic" viewBox="0 0 34 34"><path d="M6.500 0v15M0 21q0-3 3-3.500h7q3 .5 3 3.500l-1 10q-5 5-10 0z" fill="#a9a9a9" stroke="#a9a9a9" stroke-width="1"/><path d="M17 2v6q0 4 4 6v17q4 5 8 0V14q5-2 5-6V2l-4-2v8h-8V0z" fill="#a9a9a9"/></svg></span>
            <span class="sep"><svg class="ic" viewBox="0 0 34 34"><path d="M0 9q0-3 3-3h6q1-5 3-5h9q2 0 3 5h10v28H0z" fill="#b4b4b4"/><path d="M3.500 11H25v17H3.500z" fill="#1d1d1d"/><path d="M6 15h16M6 19h16M6 23h16" stroke="#555" stroke-width="1.600"/><path d="M11 3h9v4h-9z" fill="#1d1d1d"/><circle cx="29" cy="15" r="2" fill="#1d1d1d"/><circle cx="29" cy="24" r="2" fill="#1d1d1d"/></svg></span>
            <span><svg class="ic" viewBox="0 0 34 34"><path d="M2 0h30l2 3v15h-5v-8H5v8H0V3z" fill="#b4b4b4"/><path d="M7 12h20v22H7z" fill="#7d7d7d"/><path d="M10 31l5-11 3 5 2-2 4 8z" fill="#1d1d1d"/><circle cx="22" cy="19" r="2" fill="#1d1d1d"/></svg></span>
            <span><svg class="ic"><use href="#layers"/></svg></span>
            <span><svg class="ic"><use href="#scene"/></svg></span>
            <span><svg class="ic" viewBox="0 0 34 34"><circle cx="17" cy="17" r="15.500" fill="none" stroke="#b5505a" stroke-width="2.400"/><path d="M5 8Q11 1 18 3l2 4-4 4-1 5-4-2-7-1zM15 20l5-2 5 4-2 6-5 2-1-5zM9 15l6 5" fill="#b5505a"/><path d="M0 34l6-5M34 0l-6 6" stroke="#b5505a" stroke-width="2.400"/></svg></span>
            <span class="sep coll"><svg class="ic" viewBox="0 0 34 34"><path d="M1.500 3h31v7.500h-31zM4.500 14v17.500h25V14" fill="none" stroke="#c8c8c8" stroke-width="3"/><path d="M13 16h9v4h-9z" fill="#c8c8c8"/></svg></span>
            <span class="act"><svg class="ic"><use href="#obj"/></svg></span>
            <span class="blue"><svg class="ic"><use href="#wrench"/></svg></span>
            <span class="blue"><svg class="ic" viewBox="0 0 34 34"><path d="M6.500 7v24M6 6.500h24M8 8l22 22" stroke="#4563a0" stroke-width="2.200"/><circle cx="6.500" cy="6.500" r="6" fill="#5f87d6"/><g fill="#4a69a8"><circle cx="30.500" cy="6.500" r="3.200"/><circle cx="6.500" cy="30.500" r="3.200"/><circle cx="29" cy="29" r="4.800"/></g></svg></span>
            <span class="blue"><svg class="ic" viewBox="0 0 34 34"><path d="M23 2Q12-1 5 7q-6 10 0 19 7 8 17 6 6-2 9-7" fill="none" stroke="#4a69a8" stroke-width="2.400"/><circle cx="17" cy="17.500" r="7" fill="#5f87d6"/><circle cx="29" cy="6" r="5" fill="#4a69a8"/></svg></span>
            <span class="blue"><svg class="ic" viewBox="0 0 34 34"><path d="M4 13 26 2q7-1 6.500 7L22 30M4 13Q-1 20 2 28" fill="none" stroke="#5f87d6" stroke-width="2.600"/><circle cx="13" cy="21" r="6" fill="none" stroke="#5f87d6" stroke-width="5"/><circle cx="27" cy="7.500" r="2.300" fill="#5f87d6"/></svg></span>
          </div>
          <div class="pmain">
            <div class="ctx"><svg class="ic"><use href="#obj"/></svg><span>Cube</span><svg class="ic dim"><use href="#pin"/></svg></div>
            <div class="group idrow"><span class="seg dd"><svg class="ic"><use href="#obj"/></svg><svg class="cv"><use href="#cv"/></svg></span><span class="seg field pname">Cube</span></div>
            <div class="panel">
              <div class="ptitle"><svg class="cvb"><use href="#cvb"/></svg><span>Transform</span><i></i></div>
              <div class="triple">
                <div><label>Locati...</label><span>0 m</span><svg class="lock"><use href="#lock"/></svg><i></i></div>
                <div><label>Y</label><span>0 m</span><svg class="lock"><use href="#lock"/></svg><i></i></div>
                <div><label>Z</label><span>0 m</span><svg class="lock"><use href="#lock"/></svg><i></i></div>
              </div>
              <div class="triple">
                <div><label>Rotati...</label><span>0°</span><svg class="lock"><use href="#lock"/></svg><i></i></div>
                <div><label>Y</label><span>0°</span><svg class="lock"><use href="#lock"/></svg><i></i></div>
                <div><label>Z</label><span>0°</span><svg class="lock"><use href="#lock"/></svg><i></i></div>
              </div>
              <div class="single"><label>Mode</label><span>XY...<svg class="cv"><use href="#cv"/></svg></span><i></i></div>
              <div class="triple">
                <div><label>Scale X</label><span>1.0</span><svg class="lock"><use href="#lock"/></svg><i></i></div>
                <div><label>Y</label><span>1.0</span><svg class="lock"><use href="#lock"/></svg><i></i></div>
                <div><label>Z</label><span>1.0</span><svg class="lock"><use href="#lock"/></svg><i></i></div>
              </div>
              <div class="delta"><svg class="cr"><use href="#cr"/></svg><span>Delta Transform</span></div>
            </div>
            <i class="pbar"></i>
          </div>
        </div>
      </section>
    </div>
  </div>

  <footer class="status">
    <svg class="ms m1" viewBox="0 0 28 38"><use href="#mouse"/><path d="M0 5q0-5 5-5h7v19H0z" fill="#8c8c8c"/></svg><span>Select</span>
    <svg class="ms m2" viewBox="0 0 28 38"><use href="#mouse"/><rect x="9.500" y="5" width="9" height="18" rx="2" fill="#8c8c8c"/></svg>
    <svg class="ms m3" viewBox="0 0 28 38"><use href="#mouse"/><path d="M16 0h7q5 0 5 5v14H16z" fill="#8c8c8c"/></svg><span>Mute Links</span>
    <svg class="ic net" viewBox="0 0 34 34"><g fill="none" stroke="#777" stroke-width="2.200"><circle cx="17" cy="17" r="15.500"/><ellipse cx="17" cy="17" rx="7" ry="15.500"/><path d="M3 10h28M2 17h30M3 24h28M17 2v30"/></g><path d="M3 0l31 31" stroke="#181818" stroke-width="4"/><path d="M0 1l33 33" stroke="#999" stroke-width="2.600"/></svg><i></i><span>4.2.0</span>
  </footer>
</div>
</body>
</html>
```
FILE: styles.css
```css
* { box-sizing: border-box; }
body { margin: 0; background: #fff; width: 2687px; height: 1397px; overflow: hidden; font: 25px/30px Inter, sans-serif; letter-spacing: .3px; color: #e0e0e0; }
i, em { font-style: normal; display: block; }
h4, p { margin: 0; font-weight: 400; }
svg { display: block; flex: none; }
.defs { position: absolute; }
.app { width: 2685px; height: 1396px; margin: 0 1px; background: #181818; display: flex; flex-direction: column; }
.ic { width: 34px; height: 34px; }
.cv { width: 15px; height: 9px; }
.cvb { width: 22px; height: 13px; color: #c0c0c0; }
.cr { width: 13px; height: 22px; color: #c0c0c0; }
.xx { width: 19px; height: 19px; }
.dim { color: #999; }
.ml19 { margin-left: 19px; }
.ml20 { margin-left: 21px; }

.title { height: 53px; background: #202020; display: flex; align-items: center; padding: 0 43px 0 4px; color: #fff; }
.logo { width: 36px; height: 28px; }
.title-text { font: 26px/30px "Open Sans", "Noto Sans", sans-serif; margin-left: 9px; letter-spacing: .1px; }
.winctl { width: 240px; height: 30px; margin-left: auto; }

.topbar { height: 63px; display: flex; align-items: flex-start; padding-left: 22px; }
.blogo { width: 37px; height: 33px; margin-top: 14px; }
.menu { display: flex; gap: 36px; color: #d2d2d2; }
.topbar .menu { margin: 15px 0 0 22px; gap: 35.600px; width: 474px; flex: none; }
.tabs { display: flex; gap: 1px; margin: 11px 0 0 50px; color: #989898; width: 1291px; flex: none; overflow: hidden; }
.tabs span { height: 49px; padding: 11px 22.800px 0; background: #1d1d1d; border-radius: 8px 8px 0 0; white-space: nowrap; }
.group { display: flex; height: 45px; border: 1px solid #3d3d3d; border-radius: 8px; overflow: hidden; background: #282828; flex: none; }
.seg { display: flex; align-items: center; justify-content: center; min-width: 44px; border-left: 1px solid #3d3d3d; white-space: nowrap; }
.seg:first-child { border-left: 0; }
.seg.dd { width: 71px; justify-content: flex-start; padding-left: 9px; }
.seg.dd .cv, .btn.dd .cv { margin-left: 4px; }
.lit { background: #545454; }
.mid { background: #434343; }
.sel { background: #4772b3; }
.off { background: #303030; color: #606060; }
.field { background: #1d1d1d; justify-content: flex-start; padding-left: 17px; }
.scene { margin: 8px 0 0 16px; width: 395px; }
.scene-name { width: 232px; }
.scene-name .ic { margin-left: 94px; color: #808080; }
.scene .off, .layer .off { flex: 1; }
.layer { margin: 8px 0 0 12px; width: 349px; }
.layer-name { width: 186px; }

.work { height: 1231px; display: flex; gap: 4px; padding-left: 1px; }
.left { width: 2216px; flex: none; display: flex; flex-direction: column; }
.upper { display: flex; gap: 3px; height: 565px; }
section { position: relative; border-radius: 9px; overflow: hidden; }
.head { height: 59px; display: flex; align-items: center; padding: 2px 0 0 18px; }
.btn { height: 45px; flex: none; border: 1px solid #3d3d3d; border-radius: 8px; background: #282828; display: flex; align-items: center; white-space: nowrap; }
.btn.dd { width: 71px; padding-left: 8px; }

.sheet { width: 917px; background: #303030; }
.eval { width: 238px; margin-left: 13px; padding: 0 6px 0 16px; justify-content: space-between; }
.objname { width: 66px; }
.pinned { margin-left: 35px; }
.filt { margin-left: auto; margin-right: 18px; width: 90px; }
.sheet-body { height: 448px; display: flex; align-items: flex-start; }
.tree { width: 340px; height: 429px; margin: 19px 0 0 18px; background: #252525; border: 1px solid #3d3d3d; border-bottom: 0; border-radius: 8px 8px 0 0; overflow: hidden; color: #cfcfcf; padding: 9px 10px 0; }
.tr { height: 50.300px; display: flex; align-items: center; }
.tr.top { padding-left: 3px; }
.tr.top .ic { margin: 0 20px 0 13px; }
.kids { border-left: 1px solid #454545; margin-left: 16px; }
.kids .tr { padding: 0 13px 0 52px; }
.tr .ic { margin-right: 22px; }
.tr b { margin-left: auto; font-weight: 400; color: #808080; }
.kids .tr span { white-space: nowrap; width: 150px; letter-spacing: .5px; }
.kids .tr.on { height: 44px; margin: 3px 0 3.300px -17px; padding-left: 69px; background: #4772b3; border-radius: 8px; }
.tr.on b { color: #aebdd6; }
.cut { padding: 13px 0 0 37px; align-items: flex-start; }
.tree-bar { width: 9px; height: 274px; margin: 22px 0 0 4px; border-radius: 4px; background: #3d3d3d; }
.table { width: 541px; height: 448px; margin-left: 5px; }
.thead { height: 50px; background: #303030; border-bottom: 2px solid #1e1e1e; }
.thead i, .tbody i { width: 53px; height: 100%; border-right: 2px solid #1e1e1e; background: rgba(255,255,255,.015); }
.tbody { height: 398px; background: repeating-linear-gradient(#272727 0 46.200px, #2a2a2a 46.200px 92.400px); }
.tbody i { background: rgba(255,255,255,.045); }
.sheet-foot { height: 58px; display: flex; justify-content: flex-end; align-items: center; padding: 2px 18px 0 0; color: #e6e6e6; letter-spacing: .5px; }
.sheet-foot i { width: 3px; height: 29px; background: #c8c8c8; margin: 0 24px; }
.flap { position: absolute; width: 19px; height: 32px; background: #222; border-radius: 6px 0 0 6px; display: flex; align-items: center; justify-content: flex-end; padding-right: 4px; color: #aaa; }
.sheet-flap { right: 0; top: 94px; }

.view3d { width: 1296px; background: #3d3d3d; }
.scene3d, .over3d, .links { position: absolute; inset: 0; width: 100%; height: 100%; pointer-events: none; }
.meshtext { position: absolute; left: 638px; top: 389px; width: 10px; height: 10px; overflow: visible; transform-origin: 0 0; transform: matrix3d(1,-.0025,0,0, 0,1,0,-.000669, 0,0,1,0, 0,0,0,1); }
.meshtext text { font-family: "Noto Sans", sans-serif; letter-spacing: 0; fill: #a2a2a2; stroke: #f5962e; stroke-width: 3.400px; }
.cap { font-size: 170px; }
.low { font-size: 148px; }
.vhead { position: relative; height: 62px; padding: 0 0 2px 19px; background: rgba(48,48,48,.72); }
.mode { width: 255px; margin-left: 14px; padding: 0 7px 0 8px; }
.mode span { margin: 0 auto 0 15px; }
.view3d .btn.dd { width: 70px; }
.vmenu { margin-left: 29px; width: 371px; flex: none; gap: 35.700px; }
.global { width: 178px; margin-left: 52px; padding: 0 6px 0 10px; }
.global span { margin: 0 auto 0 15px; }
.view3d .pivot { margin-left: 14px; padding-left: 10px; }
.view3d .pivot .cv { margin-left: 3px; }
.snap { margin-left: 13px; width: 117px; }
.snap .lit { min-width: 43px; }
.snap .seg.dd { padding-left: 4px; }
.snap .seg.dd .cv { margin-left: 10px; }
.nsnap .seg.dd { padding-left: 10px; }
.nsnap .seg.dd .cv { margin-left: 6px; }
.prop { margin-left: 13px; width: 92px; }
.subhead { position: relative; height: 57px; display: flex; justify-content: space-between; }
.selmodes, .optwrap { background: rgba(48,48,48,.72); padding: 5px 20px 0 19px; }
.selmodes { width: 261px; border-radius: 0 0 9px 0; }
.selmodes .group { border: 0; width: 223px; gap: 1px; background: #333; }
.selmodes .seg { flex: 1; border: 0; }
.optwrap { width: 189px; border-radius: 0 0 0 9px; }
.opts { width: 150px; padding: 0 6px 0 17px; justify-content: space-between; }
.vbody { position: relative; display: flex; padding: 20px 0 0 19px; }
.toolset { width: 92px; border-radius: 8px; overflow: hidden; display: flex; flex-direction: column; gap: 1.500px; margin-bottom: 13px; }
.tool { display: block; height: 77.600px; background: #272727; }
.tool.sel { background: #4772b3; }
.tool svg { width: 92px; height: 77px; margin-top: -1px; }
.info { margin: 1px 0 0 41px; text-shadow: 0 0 2px #000, 0 1px 2px #000; color: #eee; letter-spacing: .5px; }
.info p { height: 42px; display: flex; align-items: center; padding-bottom: 6px; }
.info i { width: 2px; height: 32px; background: #ddd; margin: 0 12px 0 13px; }
.view-flap { right: 0; top: 154px; background: #333; }
.axis { font: 600 23px Inter, sans-serif; text-anchor: middle; letter-spacing: 0; }
.callout { font: bold 48px "Liberation Sans", sans-serif; fill: #fff; letter-spacing: 0; }

.nodes { height: 567px; margin-top: 3px; background: #1d1d1d; }
.nhead { background: #222; height: 60px; padding-top: 2px; }
.modf { width: 181px; margin-left: 13px; padding: 0 6px 0 16px; justify-content: space-between; }
.nmenu { margin-left: 28px; width: 355px; flex: none; }
.data { margin-left: 164px; width: 451px; }
.dname { width: 241px; }
.data .lit { width: 46px; }
.npin { margin-left: 18px; }
.up { margin-left: auto; border-color: #333; }
.offl { background: #383838; }
.nsnap { margin-left: 12px; width: 118px; }
.over { margin: 0 18px 0 13px; width: 90px; }
.ov2 { flex: 1; }
.crumbs { height: 34px; margin-top: 34px; padding-left: 43px; display: flex; align-items: center; color: #e0e0e0; }
.crumbs span { margin-left: 21px; white-space: nowrap; letter-spacing: .35px; }
.crumbs .cr { margin: 0 23px 0 38px; }
.hbar { position: absolute; left: 18px; top: 555px; width: 2176px; height: 7px; border-radius: 4px; background: #303030; }
.vbar { position: absolute; left: 2203px; top: 83px; width: 8px; height: 451px; border-radius: 4px; background: #2e2e2e; }
.n-left { left: 0; top: 94px; border-radius: 0 6px 6px 0; background: #191919; justify-content: flex-start; padding-left: 1px; }
.n-right { right: 0; top: 95px; background: #191919; }

.node { position: absolute; background: #303030; border-radius: 5px; box-shadow: 0 0 0 1px #151515, 0 5px 14px 3px rgba(0,0,0,.55); font-size: 15.400px; line-height: 20px; letter-spacing: .1px; color: #e4e4e4; }
.node h4 { height: 27px; border-radius: 5px 5px 0 0; display: flex; align-items: center; padding: 0 0 1px 15px; letter-spacing: .1px; }
.node h4 svg { width: 13px; height: 9px; margin-right: 5px; }
.red { background: #81324b; }
.green { background: #1d725e; }
.dark { background: #1b1b1b; }
.out, .in { position: relative; height: 30px; display: flex; align-items: center; padding: 0 15px 0 14px; }
.out { justify-content: flex-end; }
.sock { position: absolute; left: -6px; top: 50%; width: 12px; height: 12px; margin-top: -6px; border-radius: 50%; background: #a1a1a1; box-shadow: 0 0 0 1px #161616; }
.out .sock { left: auto; right: -6px; }
.str { background: #70b2ff; }
.geom { background: #00d6a3; }
.dia { width: 9px; height: 9px; margin-top: -4.500px; border-radius: 0; transform: rotate(45deg); background: #598c5c; }
.out .dia { right: -5px; }
.in .dia { left: -5px; }
.pur { background: #6363c7; }
.hollow { background: #222; border: 3px solid #598c5c; }
.ring { background: #1d1d1d; border: 2px solid #888; }
.n-string { left: 828px; top: 309px; width: 189px; height: 104px; }
.n-string .out { height: 36px; margin-bottom: 6px; }
.nfield { height: 27px; margin: 0 13px; border: 1px solid #3d3d3d; border-radius: 4px; background: #1d1d1d; padding: 2px 10px; font-size: 15px; }
.n-curves { left: 1113px; top: 91px; width: 258px; height: 469px; }
.n-curves .green + .out { margin-top: 3px; }
.n-curves > .drop, .fontrow { margin: 0 15px 6.500px 14px; }
.fontrow { height: 26.500px; margin-top: 8px; display: flex; border: 1px solid #3d3d3d; border-radius: 4px; background: #1d1d1d; overflow: hidden; }
.f { width: 41px; flex: none; display: flex; align-items: center; font: bold 25px/26px "Liberation Serif", serif; padding-left: 6px; background: #282828; border-right: 1px solid #3d3d3d; }
.f svg { width: 10px; height: 7px; margin-left: 4px; }
.fn { width: 109px; padding: 1px 0 0 10px; color: #888; white-space: nowrap; }
.fb { width: 26px; background: #545454; border-left: 1px solid #3d3d3d; display: flex; align-items: center; justify-content: center; flex: none; }
.drop { height: 26.500px; border: 1px solid #3d3d3d; border-radius: 4px; background: #282828; display: flex; align-items: center; padding: 0 3px 0 10px; white-space: nowrap; }
.drop svg { width: 10px; height: 7px; margin-left: auto; }
.drop .mi { width: 20px; height: 20px; margin: 0 11px 0 0; }
.drop.di { padding-left: 6px; }
.prow { display: flex; align-items: center; justify-content: space-between; padding: 0 15px 0 23px; margin-top: -1px; }
.prow .drop { width: 129px; }
.n-curves .in { height: 33px; }
.num { position: relative; height: 25px; margin: 0 14px 4.100px; border-radius: 4px; background: #545454; display: flex; justify-content: space-between; align-items: center; padding: 0 19px 0 22px; }
.num .sock { left: -20px; }
.n-fill { left: 1498px; top: 162px; width: 190px; height: 160px; }
.n-fill .out { height: 38px; }
.toggle { display: flex; height: 26px; margin: 4px 14px 1px; border-radius: 4px; overflow: hidden; gap: 1px; }
.toggle span { flex: 1; background: #545454; text-align: center; line-height: 26px; }
.toggle span:first-child { background: #4772b3; flex: none; width: 79px; }
.n-out { left: 1743px; top: 184px; width: 189px; height: 94px; }
.n-out h4 + .in { height: 37px; }
.n-out .in + .in { height: 22px; }

.timeline { height: 92px; margin-top: 4px; background: #1d1d1d; }
.timeline .head { background: #303030; padding-top: 0; }
.play { margin-left: 13px; width: 307px; }
.pb, .ky { padding: 0 7px 0 16px; justify-content: space-between; }
.pb { width: 166px; }
.ky { flex: 1; }
.tmenu { margin-left: 23px; width: 200px; flex: none; }
.rec { margin-left: 262px; width: 89px; }
.offd { background: #2c2c2c; color: #555; flex: 1; }
.trans { margin-left: 15px; width: 275px; }
.trans .seg { flex: 1; }
.trans svg { width: 40px; height: 31px; }
.frame { margin-left: 296px; width: 170px; }
.frame .seg { flex: 1; }
.range { margin-left: 13px; width: 447px; }
.st { width: 207px; justify-content: space-between; padding: 0 38px 0 36px; }
.en { flex: 1; justify-content: space-between; padding: 0 33px 0 35px; }
.ruler { position: relative; height: 33px; overflow: hidden; }
.ticks { display: flex; margin: 6px 0 0 -1px; font-size: 22px; color: #a8a8a8; }
.ticks span { width: 164.900px; flex: none; text-align: center; height: 30px; line-height: 38px; }
.ticks .cur { width: 56px; margin: 0 20px 0 53px; background: #4772b3; color: #fff; border-radius: 5px 5px 0 0; }
.ticks .cur + span { margin-left: 26px; }
.scrub { position: absolute; left: 18px; top: 9px; width: 2178px; height: 20px; border-radius: 10px; background: #545454; display: flex; justify-content: space-between; align-items: center; padding: 0 2px; }
.scrub i { width: 14px; height: 14px; border-radius: 50%; background: #2a2a2a; border: 2px solid #666; }

.right { width: 463px; display: flex; flex-direction: column; gap: 5px; }
.outliner { height: 348px; background: #282828; }
.btn.hier { padding-left: 14px; }
.btn.hier .cv { margin-left: 0; }
.disp { margin-left: 13px; }
.btn.disp { padding-left: 10px; }
.btn.disp .cv { margin-left: 3px; }
.find { background: #1d1d1d; color: #666; padding-left: 10px; width: 300px; }
.ofind { margin-left: 37px; }
.find .ic { color: #ccc; margin-right: 15px; }
.outliner .head { height: 59px; margin-bottom: 2px; }
.orow { height: 46px; display: flex; align-items: center; background: #2b2b2b; color: #bdbdbd; white-space: nowrap; }
.orow.r0, .orow.alt { background: #282828; }
.orow span, .orow em, .orow .cvb, .orow .cr { margin-top: 3px; }
.r0 { padding-left: 53px; }
.r0 span { margin-left: 13px; width: 204px; overflow: hidden; letter-spacing: .3px; }
.r0 .bx { margin-top: -1px; }
.bx { width: 34px; height: 31px; color: #dadada; }
.r1 { padding-left: 58px; }
.orow em { width: 45px; height: 42px; border-radius: 9px; background: #555; display: flex; align-items: center; justify-content: center; margin-right: 9px; flex: none; }
.r1 em { margin-left: 13px; }
.orow.r1 span { width: 168px; }
.chk { width: 25px; height: 23px; }
.eye { width: 32px; height: 22px; margin-left: 16px; color: #e6e6e6; }
.camera { width: 32px; height: 27px; margin-left: 15px; margin-top: -2px; color: #e6e6e6; }
.orow.r2 { background: #334d80; padding-left: 67px; }
.r2 i { width: 1px; height: 24px; background: #5a6c90; }
.orow.r2 .cr { margin: 3px 15px 0 43px; }
.orow.r2 em { background: #5c7199; }
.orow.r2 span { color: #f2a62f; width: 148px; letter-spacing: .6px; }
.obar { position: absolute; left: 18px; top: 337px; width: 353px; height: 7px; border-radius: 4px; background: #3a3a3a; }

.props { height: 878px; background: #303030; }
.props .head { padding-top: 0; height: 58px; }
.props .head .btn.dd { padding-left: 10px; }
.props .head .btn.dd .cv { margin-left: 4px; }
.pfind { width: 272px; margin-left: 49px; }
.pfind .ic { margin-right: 17px; }
.more { margin-left: 35px; width: 70px; padding-left: 14px; }
.pbody { display: flex; height: 820px; }
.ptabs { width: 67px; background: #1d1d1d; display: flex; flex-direction: column; color: #b4b4b4; overflow: hidden; }
.ptabs span { height: 64.500px; flex: none; display: flex; align-items: center; padding-left: 19px; }
.ptabs .t0 { height: 84px; padding-top: 17px; }
.ptabs .sep { height: 80px; padding-top: 13px; border-top: 1px solid #181818; }
.ptabs .coll { margin-top: 0; height: 81px; padding-top: 16px; }
.ptabs .act { height: 61px; margin: 18px 0 2px 5px; padding-left: 14px; background: #303030; border-radius: 9px 0 0 9px; color: #e0965a; }
.ptabs .blue { color: #5f87d6; }
.pmain { position: relative; flex: 1; padding: 25px 0 0 18px; }
.ctx { display: flex; align-items: center; padding-left: 7px; color: #e6e6e6; }
.ctx span { width: 278px; padding-left: 20px; flex: none; letter-spacing: .6px; }
.idrow { width: 358px; margin-top: 43px; }
.idrow .seg.dd { width: 71px; }
.pname { flex: 1; letter-spacing: .6px; }
.panel { width: 358px; height: 646px; margin-top: 23px; background: #3d3d3d; border-radius: 9px; padding-top: 15px; letter-spacing: .6px; }
.ptitle { display: flex; align-items: center; padding-left: 18px; margin-bottom: 31px; letter-spacing: .8px; }
.ptitle span { margin-left: 11px; }
.ptitle i { width: 26px; height: 12px; margin: -6px 16px 0 auto; background: repeating-linear-gradient(90deg, #999 0 4px, transparent 4px 7px); -webkit-mask: linear-gradient(#000 0 4px, transparent 4px 8px, #000 8px 12px); mask: linear-gradient(#000 0 4px, transparent 4px 8px, #000 8px 12px); }
.triple { display: flex; flex-direction: column; gap: 2px; margin-bottom: 14px; }
.triple > div, .single { display: flex; align-items: center; height: 44px; }
.panel label { width: 119px; text-align: right; margin-right: 21px; white-space: nowrap; }
.triple span { width: 106px; height: 44px; background: #545454; text-align: center; line-height: 44px; }
.triple > div:first-child span { border-radius: 8px 0 0 0; }
.triple > div:last-child span { border-radius: 0 0 0 8px; }
.lock { width: 34px; height: 26px; margin-left: 7px; color: #a8a8a8; }
.triple i, .single i { width: 10px; height: 10px; border-radius: 50%; background: #d8d8d8; margin-left: 25px; }
.single { margin-bottom: 13px; }
.single span { width: 106px; height: 44px; background: #282828; border-radius: 8px; display: flex; align-items: center; justify-content: space-between; padding: 0 6px 0 17px; letter-spacing: 0; }
.single i { margin-left: 66px; }
.delta { display: flex; align-items: center; padding: 22px 0 0 57px; letter-spacing: .6px; }
.delta span { margin-left: 12px; }
.pbar { position: absolute; right: 3px; top: 22px; width: 9px; height: 488px; border-radius: 5px; background: #3d3d3d; }

.status { height: 49px; display: flex; align-items: center; color: #8c8c8c; padding: 2px 31px 0 27px; }
.ms { width: 28px; height: 38px; }
.status span { margin-left: 11px; white-space: nowrap; letter-spacing: .45px; }
.m1 + span { width: 454px; }
.m3 { margin-left: 464px; }
.net { margin-left: auto; }
.status i { width: 3px; height: 30px; background: #777; margin-left: 16px; }
```
